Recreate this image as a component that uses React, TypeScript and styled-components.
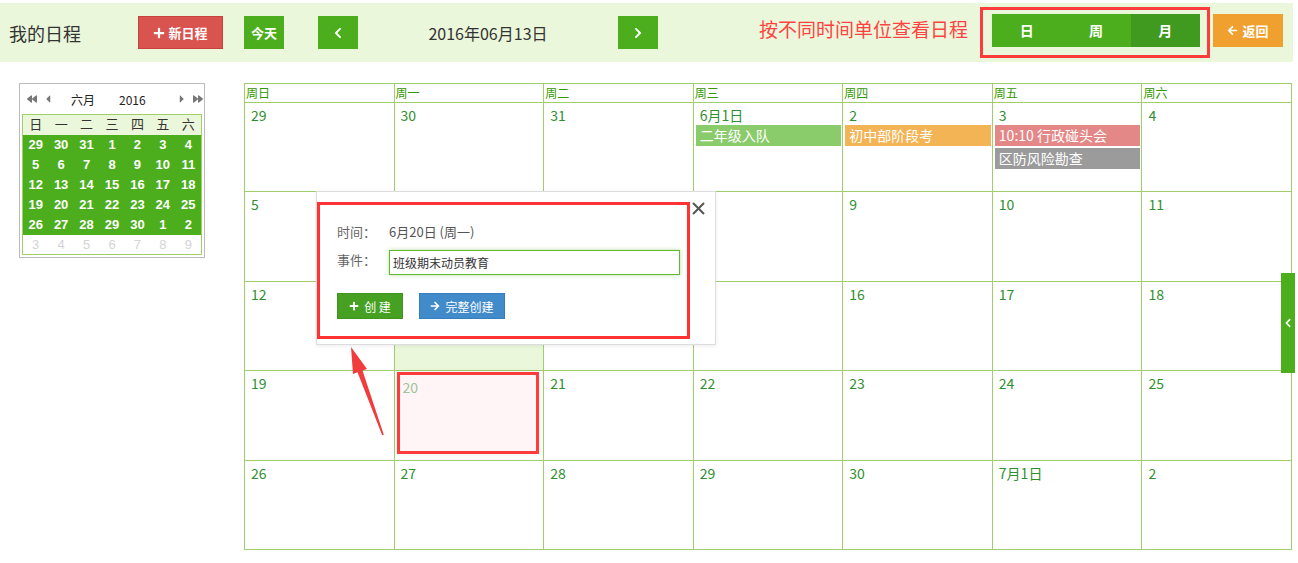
import React from "react";
import styled, { createGlobalStyle } from "styled-components";
import {
  FaPlus,
  FaChevronLeft,
  FaChevronRight,
  FaArrowLeft,
  FaArrowRight,
  FaBackward,
  FaForward,
  FaCaretLeft,
  FaCaretRight,
} from "react-icons/fa";

const GREEN = "#4cae1c";
const LINE = "#9fce6b";
const LIGHT = "#ebf7db";

const GlobalStyle = createGlobalStyle`
  body {
    margin: 0;
    background: #fff;
    font-family: "Noto Sans CJK SC", "Noto Sans", sans-serif;
  }
  * { box-sizing: border-box; }
`;

const weekNames = ["周日", "周一", "周二", "周三", "周四", "周五", "周六"];

const weeks: (string | number)[][] = [
  [29, 30, 31, "6月1日", 2, 3, 4],
  [5, 6, 7, 8, 9, 10, 11],
  [12, 13, 14, 15, 16, 17, 18],
  [19, 20, 21, 22, 23, 24, 25],
  [26, 27, 28, 29, 30, "7月1日", 2],
];

const events: Record<string, { text: string; color: string }[]> = {
  "0-3": [{ text: "二年级入队", color: "#8acb6c" }],
  "0-4": [{ text: "初中部阶段考", color: "#f3b455" }],
  "0-5": [
    { text: "10:10 行政碰头会", color: "#e38787" },
    { text: "区防风险勘查", color: "#9b9b9b" },
  ],
};

const miniWeeks = [
  [29, 30, 31, 1, 2, 3, 4],
  [5, 6, 7, 8, 9, 10, 11],
  [12, 13, 14, 15, 16, 17, 18],
  [19, 20, 21, 22, 23, 24, 25],
  [26, 27, 28, 29, 30, 1, 2],
];

const App = () => {
  return (
    <Page>
      <GlobalStyle />
      <TopBar>
        <Title>我的日程</Title>
        <Btn $bg="#d9534f" $border="#c9413d" $w={85}>
          <FaPlus size={12} /> 新日程
        </Btn>
        <Btn $bg={GREEN} $w={40} $ml={21}>今天</Btn>
        <Btn $bg={GREEN} $w={40} $ml={34}>
          <FaChevronLeft size={12} />
        </Btn>
        <DateLabel>2016年06月13日</DateLabel>
        <Btn $bg={GREEN} $w={40}>
          <FaChevronRight size={12} />
        </Btn>
        <Spacer />
        <Hint>按不同时间单位查看日程</Hint>
        <ViewFrame>
          <Segment>日</Segment>
          <Segment>周</Segment>
          <Segment $active>月</Segment>
        </ViewFrame>
        <BackBtn>
          <FaArrowLeft size={11} /> 返回
        </BackBtn>
      </TopBar>

      <Main>
        <MiniCal>
          <MiniHead>
            <NavIcon $ml={7}><FaBackward size={10} /></NavIcon>
            <NavIcon $ml={5}><FaCaretLeft size={12} /></NavIcon>
            <MiniText $ml={17}>六月</MiniText>
            <MiniText $ml={24}>2016</MiniText>
            <NavIcon $ml={30}><FaCaretRight size={12} /></NavIcon>
            <NavIcon $ml={5}><FaForward size={10} /></NavIcon>
          </MiniHead>
          <MiniTable>
            <MiniRow $kind="head">
              {["日", "一", "二", "三", "四", "五", "六"].map((d) => (
                <MiniCell key={d}>{d}</MiniCell>
              ))}
            </MiniRow>
            {miniWeeks.map((w, i) => (
              <MiniRow key={i} $kind="day">
                {w.map((d, j) => (
                  <MiniCell key={j}>{d}</MiniCell>
                ))}
              </MiniRow>
            ))}
            <MiniRow $kind="next">
              {[3, 4, 5, 6, 7, 8, 9].map((d) => (
                <MiniCell key={d}>{d}</MiniCell>
              ))}
            </MiniRow>
          </MiniTable>
        </MiniCal>

        <CalWrap>
          <Grid>
            {weekNames.map((n) => (
              <HeadCell key={n}>{n}</HeadCell>
            ))}
            {weeks.map((w, i) =>
              w.map((d, j) => {
                const evs = events[`${i}-${j}`] || [];
                if (i === 3 && j === 1) {
                  return (
                    <Cell key={`${i}-${j}`}>
                      <Picked>
                        <DayNum $muted>{d}</DayNum>
                      </Picked>
                    </Cell>
                  );
                }
                return (
                  <Cell key={`${i}-${j}`} $today={i === 2 && j === 1}>
                    <DayNum>{d}</DayNum>
                    {evs.map((e) => (
                      <EventBar key={e.text} $color={e.color}>
                        {e.text}
                      </EventBar>
                    ))}
                  </Cell>
                );
              })
            )}
          </Grid>

          <Popup>
            <CloseX width="13" height="13" viewBox="0 0 13 13">
              <path d="M1 1 L12 12 M12 1 L1 12" stroke="#555" strokeWidth="2" />
            </CloseX>
            <PopFrame>
              <FormRow>
                <FormLabel>时间：</FormLabel>
                <FormValue>6月20日 (周一)</FormValue>
              </FormRow>
              <FormRow $mt={8}>
                <FormLabel>事件：</FormLabel>
                <TextInput defaultValue="班级期末动员教育" />
              </FormRow>
              <FormRow $mt={18}>
                <SmallBtn $bg="#46a021" $border="#3f941c" $w={66}>
                  <FaPlus size={10} /> 创 建
                </SmallBtn>
                <SmallBtn $bg="#428bca" $border="#357ebd" $w={86} $ml={16}>
                  <FaArrowRight size={10} /> 完整创建
                </SmallBtn>
              </FormRow>
            </PopFrame>
          </Popup>

          <Arrow width="60" height="100" viewBox="0 0 60 100">
            <polygon
              points="11,7 27,29 22.5,30.5 43.8,94.7 42.2,95.3 17.5,32.3 13,34"
              fill="#f03c3c"
            />
          </Arrow>
        </CalWrap>
      </Main>

      <SideTab>
        <FaChevronLeft size={10} />
      </SideTab>
    </Page>
  );
};

const Page = styled.div`
  position: relative;
  width: 1298px;
  height: 563px;
  overflow: hidden;
  padding-top: 3px;
`;

const TopBar = styled.div`
  display: flex;
  align-items: center;
  height: 59px;
  margin-right: 5px;
  padding: 0 10px 0 9px;
  background: ${LIGHT};
`;

const Title = styled.div`
  width: 129px;
  font-size: 18px;
  color: #333;
`;

const Btn = styled.button<{ $bg: string; $border?: string; $w: number; $ml?: number }>`
  display: flex;
  align-items: center;
  justify-content: center;
  gap: 3px;
  width: ${(p) => p.$w}px;
  height: 33px;
  margin-left: ${(p) => p.$ml || 0}px;
  padding: 0;
  border: 1px solid ${(p) => p.$border || p.$bg};
  background: ${(p) => p.$bg};
  color: #fff;
  font-family: inherit;
  font-size: 13px;
  font-weight: bold;
`;

const DateLabel = styled.div`
  width: 260px;
  text-align: center;
  font-size: 16px;
  color: #333;
`;

const Spacer = styled.div`
  flex: 1;
`;

const Hint = styled.div`
  margin-right: 12px;
  margin-bottom: 8px;
  font-size: 19px;
  color: #ff4343;
`;

const ViewFrame = styled.div`
  display: flex;
  padding: 4px 7px 8px 9px;
  border: 3px solid #ff3b3b;
`;

const Segment = styled.div<{ $active?: boolean }>`
  width: 69.3px;
  height: 33px;
  line-height: 33px;
  text-align: center;
  background: ${(p) => (p.$active ? "#3f9a1f" : GREEN)};
  color: #fff;
  font-size: 14px;
  font-weight: bold;
`;

const BackBtn = styled.div`
  display: flex;
  align-items: center;
  justify-content: center;
  gap: 4px;
  width: 70px;
  height: 33px;
  margin-left: 3px;
  margin-bottom: 4px;
  background: #f0a02e;
  color: #fff;
  font-size: 13px;
  font-weight: bold;
`;

const Main = styled.div`
  display: flex;
  align-items: flex-start;
  padding: 21px 0 0 19px;
`;

const MiniCal = styled.div`
  width: 186px;
  border: 1px solid #bbb;
`;

const MiniHead = styled.div`
  display: flex;
  align-items: center;
  height: 30px;
  color: #777;
`;

const NavIcon = styled.span<{ $ml: number }>`
  display: flex;
  margin-left: ${(p) => p.$ml}px;
  color: #777;
`;

const MiniText = styled.span<{ $ml: number }>`
  margin-left: ${(p) => p.$ml}px;
  font-size: 12px;
  color: #222;
`;

const MiniTable = styled.div`
  margin: 0 2px 2px 2px;
  border: 1px solid ${LINE};
`;

const MiniRow = styled.div<{ $kind: "head" | "day" | "next" }>`
  display: grid;
  grid-template-columns: repeat(7, 1fr);
  height: ${(p) => (p.$kind === "next" ? 19 : 20)}px;
  line-height: ${(p) => (p.$kind === "next" ? 19 : 20)}px;
  background: ${(p) => (p.$kind === "head" ? LIGHT : p.$kind === "day" ? GREEN : "#fff")};
  color: ${(p) => (p.$kind === "head" ? "#333" : p.$kind === "day" ? "#fff" : "#d4d4d4")};
  font-family: "Liberation Sans", "Noto Sans CJK SC", sans-serif;
  font-size: 13px;
  font-weight: ${(p) => (p.$kind === "day" ? "bold" : "normal")};
`;

const MiniCell = styled.div`
  text-align: center;
`;

const CalWrap = styled.div`
  position: relative;
  width: 1048px;
  margin-left: 39px;
`;

const Grid = styled.div`
  display: grid;
  grid-template-columns: repeat(7, 1fr);
  grid-template-rows: 18px repeat(5, 1fr);
  gap: 1px;
  height: 467px;
  padding: 1px;
  background: ${LINE};
`;

const HeadCell = styled.div`
  background: #fff;
  padding-left: 1px;
  font-size: 12px;
  line-height: 18px;
  color: #339900;
`;

const Cell = styled.div<{ $today?: boolean }>`
  display: flex;
  flex-direction: column;
  background: ${(p) => (p.$today ? LIGHT : "#fff")};
`;

const DayNum = styled.div<{ $muted?: boolean }>`
  padding: 2px 0 0 ${(p) => (p.$muted ? 3 : 6)}px;
  font-size: 14px;
  line-height: 20px;
  color: ${(p) => (p.$muted ? "#9dc49a" : "#2f8f2f")};
`;

const EventBar = styled.div<{ $color: string }>`
  height: 21px;
  margin: 0 1px 2px 2px;
  padding-left: 4px;
  background: ${(p) => p.$color};
  color: #fff;
  font-size: 14px;
  line-height: 21px;
`;

const Picked = styled.div`
  flex: 1;
  margin: 1px 4px 6px 2px;
  border: 3px solid #ff3b3b;
  background: #fff5f6;
  box-shadow: 0 0 6px rgba(0, 0, 0, 0.08);
`;

const Popup = styled.div`
  position: absolute;
  left: 72px;
  top: 108px;
  width: 400px;
  height: 154px;
  border: 1px solid #ddd;
  background: #fff;
  box-shadow: 0 1px 4px rgba(0, 0, 0, 0.08);
`;

const CloseX = styled.svg`
  position: absolute;
  left: 375px;
  top: 10px;
`;

const PopFrame = styled.div`
  width: 373px;
  height: 137px;
  margin-top: 10px;
  padding: 17px 0 0 17px;
  border: 3px solid #f33;
`;

const FormRow = styled.div<{ $mt?: number }>`
  display: flex;
  align-items: flex-start;
  margin-top: ${(p) => p.$mt || 0}px;
`;

const FormLabel = styled.div`
  width: 52px;
  font-size: 13px;
  line-height: 20px;
  color: #666;
`;

const FormValue = styled.div`
  font-size: 13px;
  line-height: 20px;
  color: #555;
`;

const TextInput = styled.input`
  width: 291px;
  height: 25px;
  padding: 0 3px;
  border: 1px solid #62b733;
  box-shadow: 0 0 4px rgba(98, 183, 51, 0.45);
  outline: none;
  font-family: inherit;
  font-size: 12px;
  color: #333;
`;

const SmallBtn = styled.div<{ $bg: string; $border: string; $w: number; $ml?: number }>`
  display: flex;
  align-items: center;
  justify-content: center;
  gap: 5px;
  width: ${(p) => p.$w}px;
  height: 26px;
  margin-left: ${(p) => p.$ml || 0}px;
  border: 1px solid ${(p) => p.$border};
  background: ${(p) => p.$bg};
  color: #fff;
  font-size: 12px;
`;

const Arrow = styled.svg`
  position: absolute;
  left: 96px;
  top: 257px;
`;

const SideTab = styled.div`
  position: absolute;
  right: 3px;
  top: 273px;
  width: 14px;
  height: 100px;
  display: flex;
  align-items: center;
  justify-content: center;
  background: ${GREEN};
  color: #fff;
`;

export default App;
